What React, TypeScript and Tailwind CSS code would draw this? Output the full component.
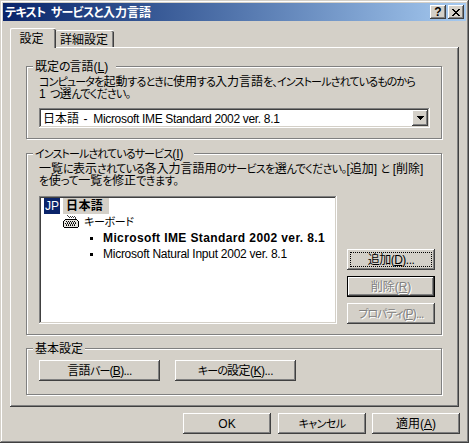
import type { ReactNode } from "react";
import clsx from "clsx";

const BEVEL_UP =
  "shadow-[inset_-1px_-1px_0_#404040,inset_1px_1px_0_#fff,inset_-2px_-2px_0_#808080]";
const BEVEL_DOWN =
  "shadow-[inset_-1px_-1px_0_#fff,inset_1px_1px_0_#808080,inset_-2px_-2px_0_#d4d0c8,inset_2px_2px_0_#404040]";

interface LabelProps {
  text: string;
  kana?: string;
  className?: string;
}

// Kana runs are set smaller and tighter than kanji, "&X" marks the underlined access key
const Label = ({ text, kana = "text-[11px] tracking-[-0.6px]", className }: LabelProps) => (
  <span className={clsx("whitespace-pre", className)}>
    {text.split(/([ぁ-んァ-ヶー、。]+|&[A-Z])/).map((part, i) => {
      if (part.startsWith("&")) {
        return (
          <span key={i} className="underline decoration-1 underline-offset-1">
            {part[1]}
          </span>
        );
      }
      return (
        <span key={i} className={i % 2 === 1 ? kana : undefined}>
          {part}
        </span>
      );
    })}
  </span>
);

interface GroupProps {
  legend: ReactNode;
  legendClass: string;
  className?: string;
  children: ReactNode;
}

const Group = ({ legend, legendClass, className, children }: GroupProps) => (
  <section
    className={clsx(
      "flex flex-col border border-[#808080] w-[416px] pl-3 shadow-[1px_1px_0_#fff,inset_1px_1px_0_#fff]",
      className
    )}
  >
    <h2 className={clsx("-mt-2 -ml-[6px] h-[15px] leading-[16px] pl-[2px] bg-[#d4d0c8]", legendClass)}>
      {legend}
    </h2>
    {children}
  </section>
);

interface ButtonProps {
  children: ReactNode;
  className?: string;
  disabled?: boolean;
  isDefault?: boolean;
  focused?: boolean;
}

const Button = ({ children, className = "w-[88px]", disabled, isDefault, focused }: ButtonProps) => (
  <button
    disabled={disabled}
    className={clsx(
      "relative flex h-[21px] shrink-0 items-center justify-center bg-[#d4d0c8]",
      isDefault && "border border-black",
      BEVEL_UP,
      disabled && "text-[#808080] [text-shadow:1px_1px_0_#fff]",
      className
    )}
  >
    {children}
    {focused && <span className="absolute inset-[3px] border border-dotted border-black" />}
  </button>
);

const KeyboardIcon = () => (
  <svg className="size-4 shrink-0" viewBox="0 0 16 16" shapeRendering="crispEdges">
    <path d="M4 1.5h1M5 2.5h1M6 3.5h1M7 2.5h1M8 3.5h1M9 2.5h1M10 3.5h1M11 2.5h1M12 3.5h1M12 4.5h1" stroke="#404040" />
    <path d="M2 5h12v1h1v1h1v6h-1v1h-14v-1h-1v-6h1v-1h1z" fill="#000" />
    <path d="M2 6h12v1h1v6h-14v-6h1z" fill="#e8e6e0" />
    <path d="M3 7.5h10M2 9.5h12M3 11.5h10" stroke="#000" strokeDasharray="1 1" />
    <path d="M4 8.5h10M3 10.5h10" stroke="#404040" strokeDasharray="1 1" />
  </svg>
);

const TitleBar = () => (
  <header className="flex h-[18px] items-center justify-between bg-linear-to-r from-[#0a246a] to-[#a6caf0] px-[2px]">
    <h1 className="pt-px font-bold text-white">
      <Label text="テキスト サービスと入力言語" kana="tracking-[-0.65px]" className="[word-spacing:2px]" />
    </h1>
    <div className="flex gap-[2px]">
      <button className={clsx("flex h-[14px] w-4 items-center justify-center bg-[#d4d0c8] font-bold text-[12px] leading-none", BEVEL_UP)}>
        ?
      </button>
      <button className={clsx("flex h-[14px] w-4 items-center justify-center bg-[#d4d0c8]", BEVEL_UP)}>
        <svg className="h-[7px] w-2" viewBox="0 0 8 7" shapeRendering="crispEdges">
          <path
            d="M0 0h2v1h1v1h2v-1h1v-1h2v1h-1v1h-1v1h-1v1h1v1h1v1h1v1h-2v-1h-1v-1h-2v1h-1v1h-2v-1h1v-1h1v-1h1v-1h-1v-1h-1v-1h-1z"
            fill="#000"
          />
        </svg>
      </button>
    </div>
  </header>
);

const services = [
  { name: "Microsoft IME Standard 2002 ver. 8.1", selected: true },
  { name: "Microsoft Natural Input 2002 ver. 8.1", selected: false },
];

export default function App() {
  return (
    <div className="flex h-[443px] w-[469px] flex-col bg-[#d4d0c8] p-[3px] text-[12px] leading-3 text-black font-['Liberation_Sans','Noto_Sans_CJK_JP',sans-serif] [font-feature-settings:'palt'] shadow-[inset_-1px_-1px_0_#404040,inset_1px_1px_0_#d4d0c8,inset_-2px_-2px_0_#808080,inset_2px_2px_0_#fff]">
      <TitleBar />

      <nav className="flex items-end pt-[7px] pl-[7px]">
        <div className="relative z-10 -mb-px flex h-5 w-[46px] items-center justify-center rounded-t-[2px] border-t border-l border-white bg-[#d4d0c8] pr-[4px] shadow-[inset_-1px_0_0_#404040,inset_-2px_0_0_#808080]">
          設定
        </div>
        <div className="flex h-[17px] w-[58px] items-center justify-center rounded-t-[2px] border-t border-white pt-px pr-[2px] shadow-[inset_-1px_0_0_#404040,inset_-2px_0_0_#808080]">
          詳細設定
        </div>
      </nav>

      <main className={clsx("ml-[7px] flex h-[360px] w-[449px] flex-col pt-[19px] pl-4", BEVEL_UP)}>
        <Group
          className="h-[73px]"
          legendClass="w-[83px]"
          legend={<Label text="既定の言語(&L)" kana="tracking-[-1px]" />}
        >
          <p className="pt-[2px] leading-3">
            <Label
              text="コンピュータを起動するときに使用する入力言語を、インストールされているものから"
              kana="text-[11px] tracking-[-0.85px]"
            />
            <br />
            <Label text="1 つ選んでください。" className="[word-spacing:1px]" kana="text-[11px] tracking-[-0.8px]" />
          </p>
          <div className={clsx("mt-[8px] flex h-5 w-[391px] items-center justify-between bg-white p-[2px] pl-1", BEVEL_DOWN)}>
            <span className="pt-[2px] whitespace-pre">
              日本語<span className="tracking-[1.2px]"> - </span>
              <span className="tracking-[-0.33px]">Microsoft IME Standard 2002 ver. 8.1</span>
            </span>
            <button className={clsx("flex h-4 w-4 items-center justify-center bg-[#d4d0c8]", BEVEL_UP)}>
              <svg className="h-1 w-[7px]" viewBox="0 0 7 4" shapeRendering="crispEdges">
                <path d="M0 0h7v1h-1v1h-1v1h-1v1h-1v-1h-1v-1h-1v-1h-1z" fill="#000" />
              </svg>
            </button>
          </div>
        </Group>

        <Group
          className="mt-[14px] h-[182px]"
          legendClass="w-[161px]"
          legend={<Label text="インストールされているサービス(&I)" kana="text-[11px] tracking-[-0.9px]" />}
        >
          <p className="mt-[2px] leading-3">
            <Label
              text="一覧に表示されている各入力言語用のサービスを選んでください。[追加] と [削除]"
              kana="text-[11px] tracking-[-0.65px]"
            />
            <br />
            <Label text="を使って一覧を修正できます。" kana="text-[11px] tracking-[-0.4px]" />
          </p>
          <div className="mt-[9px] flex gap-[10px]">
            <div className={clsx("flex h-32 w-[298px] flex-col bg-white py-[2px] pl-[5px]", BEVEL_DOWN)}>
              <div className="flex h-4 items-center gap-[3px]">
                <span className="flex size-4 items-center justify-center bg-[#0a246a] text-white">JP</span>
                <span className="flex h-4 items-center bg-[#d4d0c8] pl-[3px] pr-[6px] font-bold tracking-[0.4px]">
                  日本語
                </span>
              </div>
              <div className="flex h-4 items-center gap-[5px] pl-[19px]">
                <KeyboardIcon />
                <Label text="キーボード" kana="text-[11px] tracking-[-0.3px]" />
              </div>
              {services.map((s) => (
                <div key={s.name} className="flex h-4 items-center pl-[46px]">
                  <span className="mr-[10px] size-[3px] bg-black" />
                  <span className={s.selected ? "font-bold tracking-[0.39px]" : "tracking-[-0.26px]"}>
                    {s.name}
                  </span>
                </div>
              ))}
            </div>
            <div className="flex flex-col justify-end gap-[6px]">
              <Button focused>
                <Label text="追加(&D)..." className="tracking-[-0.5px]" />
              </Button>
              <Button disabled isDefault>
                <Label text="削除(&R)" />
              </Button>
              <Button disabled>
                <Label text="プロパティ(&P)..." kana="text-[11px] tracking-[-1px]" className="tracking-[-0.8px]" />
              </Button>
            </div>
          </div>
        </Group>

        <Group className="mt-[13px] h-[47px]" legendClass="w-[52px]" legend="基本設定">
          <div className="mt-1 flex gap-[15px]">
            <Button className="w-[121px]">
              <Label text="言語バー(&B)..." className="tracking-[-0.6px]" kana="text-[11px] tracking-[-0.9px]" />
            </Button>
            <Button className="w-[121px]">
              <Label text="キーの設定(&K)..." className="tracking-[-0.5px]" kana="text-[11px] tracking-[-0.9px]" />
            </Button>
          </div>
        </Group>
      </main>

      <footer className="mt-[6px] flex justify-end gap-[6px] pr-[6px]">
        <Button className="mr-px w-[88px]">OK</Button>
        <Button>
          <Label text="キャンセル" />
        </Button>
        <Button>
          <Label text="適用(&A)" />
        </Button>
      </footer>
    </div>
  );
}
